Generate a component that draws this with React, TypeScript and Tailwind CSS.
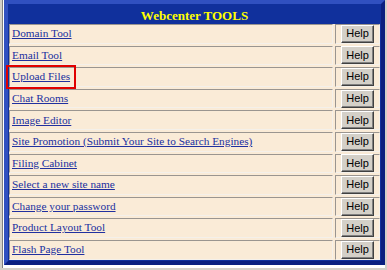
const tools = [
  "Domain Tool",
  "Email Tool",
  "Upload Files",
  "Chat Rooms",
  "Image Editor",
  "Site Promotion (Submit Your Site to Search Engines)",
  "Filing Cabinet",
  "Select a new site name",
  "Change your password",
  "Product Layout Tool",
  "Flash Page Tool",
];

function HelpButton() {
  return (
    <button className="h-[18px] w-[33px] border border-t-white border-l-white border-r-[#404040] border-b-[#404040] bg-[#d4d0c8] font-['Liberation_Sans',Arial,sans-serif] text-[11px] leading-none text-black shadow-[inset_-1px_-1px_0_#808080]">
      Help
    </button>
  );
}

export default function App() {
  return (
    <div className="h-[270px] w-[387px] bg-[#d4d0c8] pl-[2px]">
      <div className="h-[268px] w-[383px] border-l border-[#808080] bg-white pl-[1px]">
        <div className="w-[381px] border-[4px] border-t-[#3050c0] border-l-[#3050c0] border-r-[#0a1f80] border-b-[#0a1f80] bg-[#10309c] p-[1px] font-['Liberation_Serif','Times_New_Roman',serif]">
          <div className="flex h-[18px] items-start justify-center pt-[1px] text-[13px] font-bold text-[#ffff00]">
            Webcenter TOOLS
          </div>
          <div className="mt-[1px] grid grid-cols-[1fr_45px] gap-[2px] bg-[#faebd7]">
            {tools.map((t, i) => (
              <div key={t} className="contents">
                <div className="flex h-[19.6px] items-center border border-t-[#9a9590] border-l-[#9a9590] border-r-[#f4f0ea] border-b-[#f4f0ea] bg-[#faebd7] pl-[2px]">
                  <a
                    href="#"
                    className={
                      "text-[11.3px] leading-none text-[#2030a0] underline " +
                      (i === 2 ? "outline-2 outline-offset-[4px] outline-[#e00000]" : "")
                    }
                  >
                    {t}
                  </a>
                </div>
                <div className="flex h-[19.6px] items-center justify-center border border-t-[#9a9590] border-l-[#9a9590] border-r-[#f4f0ea] border-b-[#f4f0ea] bg-[#faebd7]">
                  <HelpButton />
                </div>
              </div>
            ))}
          </div>
        </div>
      </div>
    </div>
  );
}
